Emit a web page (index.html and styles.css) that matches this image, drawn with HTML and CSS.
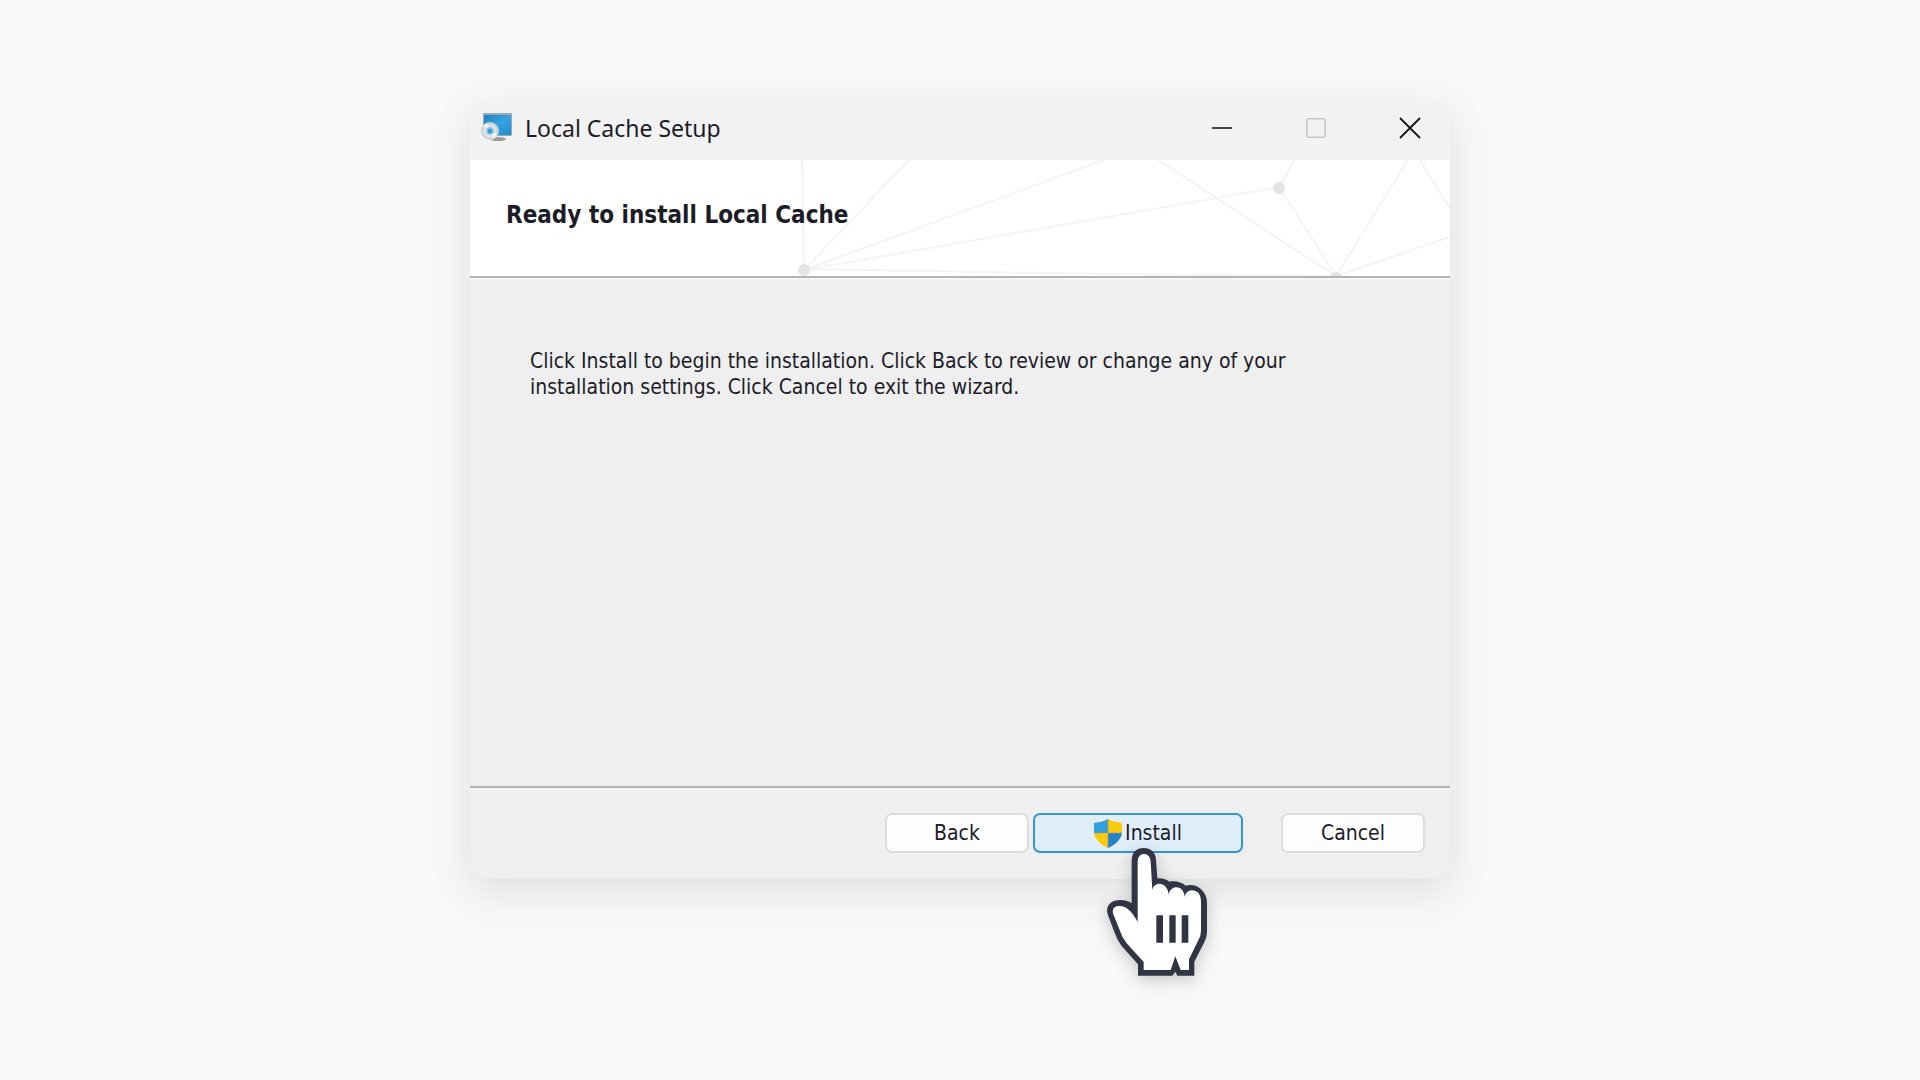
FILE: index.html
```html
<!DOCTYPE html>
<html lang="en">
<head>
<meta charset="utf-8">
<meta name="viewport" content="width=device-width, initial-scale=1">
<title>Local Cache Setup</title>
<link rel="stylesheet" href="styles.css">
</head>
<body>
<main class="window">
  <div class="titlebar">
    <svg class="app-icon" viewBox="0 0 32 32" aria-hidden="true">
      <defs>
        <linearGradient id="screen" x1="0" y1="0" x2="1" y2="1"><stop offset="0" stop-color="#1d80bd"/><stop offset=".5" stop-color="#36a2dd"/><stop offset="1" stop-color="#1f8bcd"/></linearGradient>
        <radialGradient id="disc"><stop offset="0" stop-color="#c8cdd0"/><stop offset=".6" stop-color="#e2e5e6"/><stop offset="1" stop-color="#c8cbcd"/></radialGradient>
      </defs>
      <ellipse cx="17" cy="27" rx="8" ry="2" fill="#9a9a9a"/>
      <rect x="2" y="1" width="29" height="23" rx="1" fill="#9caab3"/>
      <rect x="3" y="3" width="27" height="20" fill="url(#screen)"/>
      <circle cx="9" cy="19" r="9" fill="url(#disc)"/>
      <path d="M9 19L2 14l4-3zM9 19l7 4-4 4z" fill="#f4f5f5"/>
      <circle cx="9" cy="19" r="4" fill="#9fcdec"/>
      <circle cx="9" cy="19" r="2.5" fill="#3b9edb"/>
    </svg>
    <span class="title">Local Cache Setup</span>
    <div class="controls">
      <button class="control" type="button" aria-label="Minimize"><svg viewBox="0 0 22 22"><path d="M1 11H21" stroke="#111" stroke-width="1.5"/></svg></button>
      <button class="control" type="button" aria-label="Maximize" disabled><svg viewBox="0 0 22 22"><rect x="1.8" y="1.8" width="18.4" height="18.4" rx="1.5" fill="none" stroke="#c6c6c6" stroke-width="1.6"/></svg></button>
      <button class="control" type="button" aria-label="Close"><svg viewBox="0 0 22 22"><path d="M1 1L21 21M21 1L1 21" stroke="#16161a" stroke-width="1.8"/></svg></button>
    </div>
  </div>
  <header class="banner">
    <svg class="network" viewBox="0 0 660 116" aria-hidden="true">
      <g fill="none" stroke="#f4f4f4" stroke-width="2">
        <path d="M12 0L14 110V116M14 110L119 0M14 110L314 0M14 110L489 27L505 0M14 109L320 114L546 116M489 27L546 116L618 0M368 0L546 116L660 77M630 0L660 49"/>
      </g>
      <g fill="#e4e4e4"><circle cx="14" cy="110" r="6"/><circle cx="489" cy="28" r="6"/><circle cx="546" cy="118" r="6"/></g>
    </svg>
    <h1 class="heading">Ready to install Local Cache</h1>
  </header>
  <section class="content">
    <p class="message">Click Install to begin the installation. Click Back to review or change any of your installation settings. Click Cancel to exit the wizard.</p>
  </section>
  <footer class="actions">
    <button class="button" type="button">Back</button>
    <div class="install">
      <button class="button primary" type="button">
        <svg class="shield" viewBox="0 0 28 30" aria-hidden="true">
          <defs><clipPath id="shield-shape"><path d="M14 1C11 3 6 4 0 5V14C0 21 7 27 14 30C21 27 28 21 28 14V5C23 4 17 3 14 1Z"/></clipPath></defs>
          <g clip-path="url(#shield-shape)"><path fill="#32a0dc" d="M0 0h14v15H0z"/><path fill="#facb0c" d="M14 0h14v15H14zM0 15h14v15H0z"/><path fill="#2382c9" d="M14 15h14v15H14z"/><path d="M14 0V30M0 15H28" stroke="#a99b69" stroke-width=".8"/></g>
        </svg>
        <span>Install</span>
      </button>
      <svg class="pointer" viewBox="78 168 306 390" aria-hidden="true">
        <path fill="#313543" d="M155 210C155 184 170 171 190 171C212 171 227 184 228 206L232 262C248 261 260 265 268 272C285 268 305 273 317 284C350 275 381 300 381 335V425Q380 440 372 455L343 512V554H292L286 542L277 554H174V520L125 465Q112 448 104 425L83 370C76 345 92 327 120 327Q140 327 155 337Z"/>
        <path fill="#fff" d="M173 212C173 181 211 181 212 212L217 297C222 270 262 270 266 311C270 280 312 280 314 318C318 289 363 290 363 330V420Q363 435 355 448L327 505V537H302L286 496L272 537H191V513L140 457Q126 440 118 415L100 370C94 350 105 345 120 345C145 346 160 370 173 392Z"/>
        <path fill="#313543" d="M229 373h20v82h-20zM268 373h19v82h-19zM305 373h20v82h-20z"/>
      </svg>
    </div>
    <button class="button cancel" type="button">Cancel</button>
  </footer>
</main>
</body>
</html>
```
FILE: styles.css
```css
* { box-sizing: border-box; }

body {
  margin: 0;
  min-height: 100vh;
  padding: 102px 24px;
  background: #f8f8f8;
  color: #1c1c28;
  font-family: "DejaVu Sans Condensed", "DejaVu Sans", sans-serif;
  font-size: 21px;
}

.window {
  width: 100%;
  max-width: 980px;
  margin: 0 auto;
  border-radius: 16px;
  background: #efefef;
  box-shadow: 0 12px 40px rgba(0, 0, 0, 0.1);
}

.titlebar {
  display: flex;
  align-items: center;
  height: 58px;
  padding: 0 0 6px 11px;
  border-radius: 16px 16px 0 0;
  background: #f2f2f2;
}

.app-icon { width: 32px; height: 32px; margin-right: 12px; }

.title {
  font-family: "Noto Sans", sans-serif;
  font-size: 23px;
}

.controls { display: flex; gap: 14px; margin-left: auto; }

.control {
  display: flex;
  align-items: center;
  justify-content: center;
  width: 80px;
  height: 52px;
  padding: 0;
  border: 0;
  background: none;
}

.control svg { width: 22px; height: 22px; }

.banner {
  position: relative;
  display: flex;
  align-items: center;
  min-height: 118px;
  padding: 0 36px 6px;
  border-bottom: 2px solid #b4b4b4;
  background: #fff;
  box-shadow: 0 2px #f6f6f6;
  overflow: hidden;
}

.network { position: absolute; top: 0; right: 0; width: 660px; height: 116px; }

.heading {
  position: relative;
  margin: 0;
  font-size: 24px;
  line-height: 28px;
}

.content {
  min-height: 510px;
  padding: 70px 100px 70px 60px;
  border-bottom: 2px solid #b4b4b4;
  box-shadow: 0 2px #f6f6f6;
}

.message { margin: 0; line-height: 26px; }

.actions {
  display: flex;
  justify-content: flex-end;
  padding: 25px 25px 26px;
}

.button {
  display: flex;
  align-items: center;
  justify-content: center;
  width: 144px;
  height: 40px;
  padding: 0;
  border: 2px solid #dcdcdc;
  border-radius: 7px;
  background: #fdfdfd;
  color: inherit;
  font: inherit;
}

.install { position: relative; margin: 0 38px 0 4px; }

.primary {
  gap: 3px;
  width: 210px;
  border-color: #3795d5;
  background: #e0eefa;
}

.shield { width: 28px; height: 30px; }

.pointer {
  position: absolute;
  top: 34px;
  left: 73px;
  width: 102px;
  height: 130px;
  filter: drop-shadow(0 4px 8px rgba(0, 0, 0, 0.2));
}
```
